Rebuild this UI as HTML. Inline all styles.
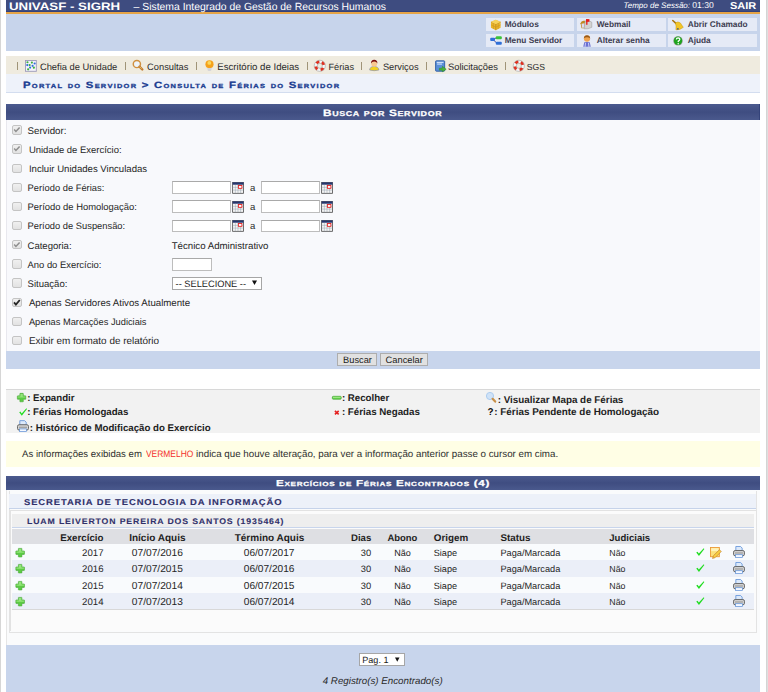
<!DOCTYPE html>
<html><head><meta charset="utf-8">
<style>
html,body{margin:0;padding:0;}
body{width:768px;height:692px;position:relative;overflow:hidden;background:#fff;font-family:"Liberation Sans",sans-serif;color:#333;text-rendering:geometricPrecision;}
.t{position:absolute;white-space:nowrap;line-height:12px;z-index:3;}
.box{position:absolute;}
svg{position:absolute;overflow:visible;z-index:3;}
.cb{position:absolute;z-index:2;width:7.6px;height:7.4px;border:1px solid #c4c4c4;border-radius:2px;background:linear-gradient(#f0f0f0,#e2e2e2);}
.inp{position:absolute;z-index:2;border:1px solid #bdbdbd;border-top-color:#a9a9a9;background:#fff;}
.sel{position:absolute;z-index:2;border:1px solid #a6a6a6;background:#fff;}
.btn{position:absolute;z-index:2;border:1px solid #adadad;background:#e1e1e1;}
</style></head><body>
<div class="box" style="left:0px;top:0px;width:1px;height:692px;background:#d6d6d6"></div>
<div class="box" style="left:766px;top:0px;width:2px;height:692px;background:linear-gradient(90deg,#cfcfcf,#e4e4e4)"></div>
<div class="box" style="left:6px;top:0px;width:754px;height:13px;background:#3e4c80"></div>
<div class="box" style="left:6px;top:14px;width:754px;height:36.5px;background:#c7d4eb"></div>
<div class="box" style="left:6px;top:11px;width:754px;height:1.3px;background:#34417a"></div>
<div class="box" style="left:6px;top:12.3px;width:754px;height:2.2px;background:#e5a446"></div>
<span class="t" style="left:8.60px;top:1px;font-size:10.8px;letter-spacing:0.0px;transform:scaleX(1.2302);transform-origin:0 0;font-weight:bold;color:#fff;">UNIVASF - SIGRH</span>
<span class="t" style="left:133.60px;top:2px;font-size:10.4px;color:#fff">– Sistema Integrado de Gestão de Recursos Humanos</span>
<span class="t" style="left:623.60px;top:0px;font-size:8.0px;font-style:italic;color:#fff">Tempo de Sessão:</span>
<span class="t" style="left:692.30px;top:-1px;font-size:8.6px;color:#fff">01:30</span>
<span class="t" style="left:729.50px;top:1px;font-size:10.0px;letter-spacing:0.0px;transform:scaleX(1.1001);transform-origin:0 0;font-weight:bold;color:#fff;">SAIR</span>
<div class="box" style="left:486px;top:17.5px;width:88px;height:13.3px;background:#e5eaf6"></div>
<div class="box" style="left:486px;top:33.7px;width:88px;height:13.1px;background:#e5eaf6"></div>
<div class="box" style="left:577px;top:17.5px;width:89px;height:13.3px;background:#e5eaf6"></div>
<div class="box" style="left:577px;top:33.7px;width:89px;height:13.1px;background:#e5eaf6"></div>
<div class="box" style="left:668px;top:17.5px;width:89px;height:13.3px;background:#e5eaf6"></div>
<div class="box" style="left:668px;top:33.7px;width:89px;height:13.1px;background:#e5eaf6"></div>
<span class="t" style="left:504.70px;top:18px;font-size:8.3px;font-weight:bold;color:#3c3c50">Módulos</span>
<span class="t" style="left:504.70px;top:34px;font-size:8.3px;font-weight:bold;color:#3c3c50">Menu Servidor</span>
<span class="t" style="left:596.70px;top:18px;font-size:8.3px;font-weight:bold;color:#3c3c50">Webmail</span>
<span class="t" style="left:596.70px;top:34px;font-size:8.3px;font-weight:bold;color:#3c3c50">Alterar senha</span>
<span class="t" style="left:687.70px;top:18px;font-size:8.3px;font-weight:bold;color:#3c3c50">Abrir Chamado</span>
<span class="t" style="left:687.70px;top:34px;font-size:8.3px;font-weight:bold;color:#3c3c50">Ajuda</span>
<svg style="left:489.7px;top:19px" width="11.6" height="11.8" viewBox="0 0 12 12"><path d="M1 3 L6 0.8 L11 3 L11 9 L6 11.5 L1 9Z" fill="#e9b62c"/><path d="M1 3 L6 5.2 L11 3 M6 5.2 V11.5" fill="none" stroke="#b9821a" stroke-width="0.7"/><path d="M1 6 L6 8.3 L11 6 M3.5 1.9 L3.5 10.2 M8.5 1.9 L8.5 10.2" fill="none" stroke="#c8901e" stroke-width="0.5"/><path d="M1 3 L6 0.8 L11 3 L6 5.2Z" fill="#f6d25a"/></svg>
<svg style="left:489.7px;top:36.4px" width="12" height="9" viewBox="0 0 12 9"><path d="M3 3.5 L7 1.5 M3 3.5 L7 7.3" stroke="#3a3a8a" stroke-width="0.9" fill="none"/><rect x="0.2" y="1.8" width="4.8" height="3.3" rx="1" fill="#2f6fd8"/><rect x="5.8" y="0.2" width="6" height="3" rx="1" fill="#3cc23a"/><rect x="5.8" y="5.8" width="6" height="3" rx="1" fill="#2f6fd8"/></svg>
<svg style="left:580px;top:19px" width="12.3" height="10.5" viewBox="0 0 12 10"><path d="M0.5 4 Q1 1.5 3.5 1.5 L5 1.5 L5 9 L1.5 9Z" fill="#c08a20"/><path d="M1.5 4.5 L4.5 4 L4.5 8.5 L2 8.5Z" fill="#dcdcf5"/><path d="M5 1.8 Q9.5 1 11.5 3 L11.5 8 Q8 10 4 9.5Z" fill="#d2d2d2" stroke="#9a9a9a" stroke-width="0.5"/><rect x="6" y="0" width="1.3" height="5.5" fill="#e51a1a"/><rect x="6" y="0" width="3.2" height="2.6" fill="#e51a1a"/></svg>
<svg style="left:583px;top:35px" width="8" height="11.8" viewBox="0 0 8 12"><circle cx="4" cy="3.6" r="3.2" fill="#f0a450"/><path d="M0.8 3.2 Q1 0.2 4 0.2 Q7 0.2 7.2 3.2 Q4 1.5 0.8 3.2Z" fill="#9a5a18"/><path d="M0.2 12 L1.2 7.5 Q4 6.6 6.8 7.5 L7.8 12Z" fill="#6a70d0"/><path d="M2.5 8 L2 12 M5.5 8 L6 12" stroke="#e8e8ff" stroke-width="0.8"/></svg>
<svg style="left:671.9px;top:19px" width="11.8" height="11.8" viewBox="0 0 12 12"><path d="M0.8 1.5 L4 4.5" stroke="#a8740e" stroke-width="1.6" stroke-linecap="round"/><path d="M3.5 4 Q6 2 8.5 4 L11.5 8.5 Q8 11.5 4 11 Q4.5 7 3.5 4Z" fill="#f2c628" stroke="#c8960e" stroke-width="0.5"/><circle cx="6" cy="10" r="0.9" fill="#4a5a7a"/></svg>
<svg style="left:673.3px;top:36.4px" width="10" height="9.8" viewBox="0 0 10 10"><circle cx="5" cy="5" r="4.8" fill="#9a9a9a"/><circle cx="5" cy="4.8" r="4.3" fill="#1fa51f"/><path d="M3.3 3.6 Q3.4 1.8 5.1 1.8 Q6.9 1.9 6.8 3.5 Q6.7 4.6 5.3 5.2 L5.2 6.3" fill="none" stroke="#fff" stroke-width="1.3"/><circle cx="5.2" cy="7.9" r="0.8" fill="#fff"/></svg>
<div class="box" style="left:6px;top:56px;width:754px;height:18px;background:#efebdf"></div>
<div class="box" style="left:17.4px;top:62.1px;width:1px;height:8px;background:#a09478;z-index:3"></div>
<div class="box" style="left:125.3px;top:62.1px;width:1px;height:8px;background:#a09478;z-index:3"></div>
<div class="box" style="left:195.6px;top:62.1px;width:1px;height:8px;background:#a09478;z-index:3"></div>
<div class="box" style="left:307.2px;top:62.1px;width:1px;height:8px;background:#a09478;z-index:3"></div>
<div class="box" style="left:361px;top:62.1px;width:1px;height:8px;background:#a09478;z-index:3"></div>
<div class="box" style="left:426.4px;top:62.1px;width:1px;height:8px;background:#a09478;z-index:3"></div>
<div class="box" style="left:505px;top:62.1px;width:1px;height:8px;background:#a09478;z-index:3"></div>
<span class="t" style="left:39.90px;top:61px;font-size:9.35px;color:#2a2a2a">Chefia de Unidade</span>
<span class="t" style="left:147.10px;top:61px;font-size:9.3px;color:#2a2a2a">Consultas</span>
<span class="t" style="left:217.30px;top:62px;font-size:9.65px;color:#2a2a2a">Escritório de Ideias</span>
<span class="t" style="left:328.50px;top:61px;font-size:9.2px;color:#2a2a2a">Férias</span>
<span class="t" style="left:382.90px;top:61px;font-size:9.3px;color:#2a2a2a">Serviços</span>
<span class="t" style="left:448.00px;top:61px;font-size:9.35px;color:#2a2a2a">Solicitações</span>
<span class="t" style="left:526.70px;top:61px;font-size:8.7px;color:#2a2a2a">SGS</span>
<svg style="left:25.25px;top:59.6px" width="11.8" height="11.8" viewBox="0 0 12 12"><rect x="0.5" y="0.5" width="11" height="11" fill="#f4f2fb" stroke="#9a98b8" stroke-width="0.9"/><g fill="#3cb23c"><circle cx="2.5" cy="2.3" r="1.1"/><circle cx="7" cy="2.6" r="1.1"/><circle cx="4.7" cy="5.2" r="1.1"/><circle cx="9" cy="7.8" r="1.1"/><circle cx="3.2" cy="9.5" r="1.1"/></g><g fill="#2f6fd8"><circle cx="9.8" cy="3.6" r="1.1"/><circle cx="2.3" cy="5.2" r="1.1"/><circle cx="7.7" cy="5.9" r="1.1"/><circle cx="5.2" cy="7.7" r="1.1"/></g></svg>
<svg style="left:132.3px;top:59.2px" width="11.7" height="12" viewBox="0 0 12 12"><circle cx="5" cy="5" r="3.7" fill="#eef4fa" stroke="#d09040" stroke-width="1.5"/><path d="M7.7 7.7 L10.6 10.6" stroke="#c07a30" stroke-width="2.4" stroke-linecap="round"/><path d="M8 8 L9.5 9.5" stroke="#f0d070" stroke-width="0.9" stroke-linecap="round"/></svg>
<svg style="left:204.8px;top:59.8px" width="9" height="11.6" viewBox="0 0 9 12"><circle cx="4.5" cy="4.4" r="4.2" fill="#f5a11a"/><circle cx="4.3" cy="3" r="2" fill="#fbd75a"/><path d="M2.2 8 Q4.5 9 6.8 8 L6.3 10.8 Q4.5 12 2.7 10.8Z" fill="#d4d4d8"/></svg>
<svg style="left:314.2px;top:59.8px" width="11.6" height="11.6" viewBox="0 0 12 12"><circle cx="6" cy="6" r="4.2" fill="none" stroke="#f4f6f8" stroke-width="3.2"/><circle cx="6" cy="6" r="4.2" fill="none" stroke="#e2301e" stroke-width="3.2" stroke-dasharray="3.3 3.3" transform="rotate(-60 6 6)"/><circle cx="6" cy="6" r="5.8" fill="none" stroke="#a0a0a0" stroke-width="0.6"/><circle cx="6" cy="6" r="2.6" fill="#efebdf" stroke="#9a9a9a" stroke-width="0.6"/></svg>
<svg style="left:369px;top:59.2px" width="10.5" height="12" viewBox="0 0 10.5 12"><path d="M0.6 11 Q0.8 7.6 5.2 7.4 Q9.6 7.6 9.9 11 Q5.2 12.4 0.6 11Z" fill="#f3d21e" stroke="#7a86b8" stroke-width="0.6"/><circle cx="5.2" cy="4.8" r="2.9" fill="#f8c890"/><path d="M2 4.5 Q2 0.8 5.2 0.8 Q8.4 0.8 8.4 4.5 Q7.5 2.6 5.2 2.6 Q2.9 2.6 2 4.5Z" fill="#7a0c0c"/></svg>
<svg style="left:434.5px;top:59.6px" width="11.6" height="12" viewBox="0 0 12 12"><rect x="0.6" y="0.6" width="9.4" height="10.8" rx="0.8" fill="#5a90d8" stroke="#2a58a0" stroke-width="0.9"/><rect x="1.8" y="1.7" width="7" height="1" fill="#e8f0ff"/><rect x="2.2" y="3.4" width="5" height="1.2" fill="#c8dcf8"/><path d="M4.5 8.3 H7.6 V6.3 L11.6 9.3 L7.6 12 V10.3 H4.5Z" fill="#4bb43a" stroke="#2a8a20" stroke-width="0.5"/></svg>
<svg style="left:512.6px;top:59.8px" width="11.6" height="11.6" viewBox="0 0 12 12"><circle cx="6" cy="6" r="4.2" fill="none" stroke="#f4f6f8" stroke-width="3.2"/><circle cx="6" cy="6" r="4.2" fill="none" stroke="#e2301e" stroke-width="3.2" stroke-dasharray="3.3 3.3" transform="rotate(-60 6 6)"/><circle cx="6" cy="6" r="5.8" fill="none" stroke="#a0a0a0" stroke-width="0.6"/><circle cx="6" cy="6" r="2.6" fill="#efebdf" stroke="#9a9a9a" stroke-width="0.6"/></svg>
<div class="box" style="left:6px;top:74px;width:754px;height:17.7px;background:#eef2fa"></div>
<div class="box" style="left:6px;top:91.7px;width:754px;height:1px;background:#d3ddef"></div>
<span class="t" style="left:23.30px;top:79px;font-size:9.1px;letter-spacing:1.0px;transform:scaleX(1.2478);transform-origin:0 0;font-weight:bold;color:#1b3d91;font-variant:small-caps;-webkit-text-stroke:0.3px #1b3d91;">Portal do Servidor &gt; Consulta de Férias do Servidor</span>
<div class="box" style="left:6px;top:104px;width:754px;height:16px;background:linear-gradient(#4b5a8e,#3f4d81 50%,#4a598d);border-right:1px solid #34437a;box-sizing:border-box"></div>
<span class="t" style="left:323.10px;top:107px;font-size:9.3px;letter-spacing:0.5px;transform:scaleX(1.2711);transform-origin:0 0;font-weight:bold;color:#fff;font-variant:small-caps;-webkit-text-stroke:0.25px #fff;">Busca por Servidor</span>
<div class="box" style="left:6px;top:120px;width:754px;height:230.5px;background:#f8f9fc"></div>
<div class="box" style="left:6px;top:120px;width:1px;height:230.5px;background:#e8e8ee"></div>
<span class="t" style="left:27.50px;top:126px;font-size:9.72px;color:#262626">Servidor:</span>
<div class="cb" style="left:12.2px;top:125.20px"><svg width="9.6" height="9.2" viewBox="0 0 9.6 9.2" style="left:-1px;top:-1px"><path d="M2.2 4.6 L3.9 6.4 L7.6 2.4" fill="none" stroke="#8e8e8e" stroke-width="1.5"/></svg></div>
<span class="t" style="left:28.90px;top:145px;font-size:9.48px;color:#262626">Unidade de Exercício:</span>
<div class="cb" style="left:12.2px;top:144.35px"><svg width="9.6" height="9.2" viewBox="0 0 9.6 9.2" style="left:-1px;top:-1px"><path d="M2.2 4.6 L3.9 6.4 L7.6 2.4" fill="none" stroke="#8e8e8e" stroke-width="1.5"/></svg></div>
<span class="t" style="left:28.90px;top:164px;font-size:9.61px;color:#262626">Incluir Unidades Vinculadas</span>
<div class="cb" style="left:12.2px;top:163.50px"></div>
<span class="t" style="left:27.50px;top:182px;font-size:9.34px;color:#262626">Período de Férias:</span>
<div class="cb" style="left:12.2px;top:182.65px"></div>
<span class="t" style="left:27.50px;top:201px;font-size:9.41px;color:#262626">Período de Homologação:</span>
<div class="cb" style="left:12.2px;top:201.80px"></div>
<span class="t" style="left:27.50px;top:220px;font-size:9.35px;color:#262626">Período de Suspensão:</span>
<div class="cb" style="left:12.2px;top:220.95px"></div>
<span class="t" style="left:27.50px;top:241px;font-size:9.56px;color:#262626">Categoria:</span>
<div class="cb" style="left:12.2px;top:240.10px"><svg width="9.6" height="9.2" viewBox="0 0 9.6 9.2" style="left:-1px;top:-1px"><path d="M2.2 4.6 L3.9 6.4 L7.6 2.4" fill="none" stroke="#8e8e8e" stroke-width="1.5"/></svg></div>
<span class="t" style="left:27.50px;top:259px;font-size:9.43px;color:#262626">Ano do Exercício:</span>
<div class="cb" style="left:12.2px;top:259.25px"></div>
<span class="t" style="left:27.50px;top:279px;font-size:9.59px;color:#262626">Situação:</span>
<div class="cb" style="left:12.2px;top:278.40px"></div>
<span class="t" style="left:28.90px;top:298px;font-size:9.68px;color:#262626">Apenas Servidores Ativos Atualmente</span>
<div class="cb" style="left:12.2px;top:297.55px"><svg width="9.6" height="9.2" viewBox="0 0 9.6 9.2" style="left:-1px;top:-1px"><path d="M2.0 4.4 L3.9 6.6 L7.8 2.0" fill="none" stroke="#262626" stroke-width="1.8"/></svg></div>
<span class="t" style="left:28.90px;top:316px;font-size:9.29px;color:#262626">Apenas Marcações Judiciais</span>
<div class="cb" style="left:12.2px;top:316.70px"></div>
<span class="t" style="left:28.90px;top:336px;font-size:9.93px;color:#262626">Exibir em formato de relatório</span>
<div class="cb" style="left:12.2px;top:335.85px"></div>
<div class="inp" style="left:171.7px;top:181.30px;width:57.3px;height:10.9px"></div>
<svg style="left:231.5px;top:182.0px" width="12.2" height="11.7" viewBox="0 0 12 12"><rect x="0.4" y="0.4" width="11.2" height="11.2" fill="#f4f4f4" stroke="#444" stroke-width="0.8"/><rect x="0.4" y="0.4" width="11.2" height="2.4" fill="#26366e"/><g stroke="#8a9aa8" stroke-width="0.45"><path d="M0.5 5.5 H11.5 M0.5 8.3 H11.5 M3.2 2.8 V11.5 M5.9 2.8 V11.5 M8.6 2.8 V11.5"/></g><rect x="6.3" y="3.6" width="3.6" height="2.9" fill="#fff" stroke="#e41e1e" stroke-width="0.9"/></svg>
<div class="inp" style="left:261.2px;top:181.30px;width:56.8px;height:10.9px"></div>
<svg style="left:320.5px;top:182.0px" width="12.2" height="11.7" viewBox="0 0 12 12"><rect x="0.4" y="0.4" width="11.2" height="11.2" fill="#f4f4f4" stroke="#444" stroke-width="0.8"/><rect x="0.4" y="0.4" width="11.2" height="2.4" fill="#26366e"/><g stroke="#8a9aa8" stroke-width="0.45"><path d="M0.5 5.5 H11.5 M0.5 8.3 H11.5 M3.2 2.8 V11.5 M5.9 2.8 V11.5 M8.6 2.8 V11.5"/></g><rect x="6.3" y="3.6" width="3.6" height="2.9" fill="#fff" stroke="#e41e1e" stroke-width="0.9"/></svg>
<span class="t" style="left:250.00px;top:183px;font-size:9.5px;color:#262626">a</span>
<div class="inp" style="left:171.7px;top:200.45px;width:57.3px;height:10.9px"></div>
<svg style="left:231.5px;top:201.15px" width="12.2" height="11.7" viewBox="0 0 12 12"><rect x="0.4" y="0.4" width="11.2" height="11.2" fill="#f4f4f4" stroke="#444" stroke-width="0.8"/><rect x="0.4" y="0.4" width="11.2" height="2.4" fill="#26366e"/><g stroke="#8a9aa8" stroke-width="0.45"><path d="M0.5 5.5 H11.5 M0.5 8.3 H11.5 M3.2 2.8 V11.5 M5.9 2.8 V11.5 M8.6 2.8 V11.5"/></g><rect x="6.3" y="3.6" width="3.6" height="2.9" fill="#fff" stroke="#e41e1e" stroke-width="0.9"/></svg>
<div class="inp" style="left:261.2px;top:200.45px;width:56.8px;height:10.9px"></div>
<svg style="left:320.5px;top:201.15px" width="12.2" height="11.7" viewBox="0 0 12 12"><rect x="0.4" y="0.4" width="11.2" height="11.2" fill="#f4f4f4" stroke="#444" stroke-width="0.8"/><rect x="0.4" y="0.4" width="11.2" height="2.4" fill="#26366e"/><g stroke="#8a9aa8" stroke-width="0.45"><path d="M0.5 5.5 H11.5 M0.5 8.3 H11.5 M3.2 2.8 V11.5 M5.9 2.8 V11.5 M8.6 2.8 V11.5"/></g><rect x="6.3" y="3.6" width="3.6" height="2.9" fill="#fff" stroke="#e41e1e" stroke-width="0.9"/></svg>
<span class="t" style="left:250.00px;top:202px;font-size:9.5px;color:#262626">a</span>
<div class="inp" style="left:171.7px;top:219.60px;width:57.3px;height:10.9px"></div>
<svg style="left:231.5px;top:220.3px" width="12.2" height="11.7" viewBox="0 0 12 12"><rect x="0.4" y="0.4" width="11.2" height="11.2" fill="#f4f4f4" stroke="#444" stroke-width="0.8"/><rect x="0.4" y="0.4" width="11.2" height="2.4" fill="#26366e"/><g stroke="#8a9aa8" stroke-width="0.45"><path d="M0.5 5.5 H11.5 M0.5 8.3 H11.5 M3.2 2.8 V11.5 M5.9 2.8 V11.5 M8.6 2.8 V11.5"/></g><rect x="6.3" y="3.6" width="3.6" height="2.9" fill="#fff" stroke="#e41e1e" stroke-width="0.9"/></svg>
<div class="inp" style="left:261.2px;top:219.60px;width:56.8px;height:10.9px"></div>
<svg style="left:320.5px;top:220.3px" width="12.2" height="11.7" viewBox="0 0 12 12"><rect x="0.4" y="0.4" width="11.2" height="11.2" fill="#f4f4f4" stroke="#444" stroke-width="0.8"/><rect x="0.4" y="0.4" width="11.2" height="2.4" fill="#26366e"/><g stroke="#8a9aa8" stroke-width="0.45"><path d="M0.5 5.5 H11.5 M0.5 8.3 H11.5 M3.2 2.8 V11.5 M5.9 2.8 V11.5 M8.6 2.8 V11.5"/></g><rect x="6.3" y="3.6" width="3.6" height="2.9" fill="#fff" stroke="#e41e1e" stroke-width="0.9"/></svg>
<span class="t" style="left:250.00px;top:221px;font-size:9.5px;color:#262626">a</span>
<span class="t" style="left:171.70px;top:241px;font-size:9.69px;color:#262626">Técnico Administrativo</span>
<div class="inp" style="left:171.7px;top:258.1px;width:38.6px;height:10.5px"></div>
<div class="sel" style="left:171.7px;top:276.9px;width:88.2px;height:11.1px"></div>
<span class="t" style="left:175.60px;top:278px;font-size:9.25px;color:#1a1a1a">-- SELECIONE --</span>
<svg style="left:252px;top:280.3px" width="5" height="5.2" viewBox="0 0 5 5"><path d="M0 0.3 H5 L2.5 5Z" fill="#111"/></svg>
<div class="box" style="left:6px;top:350.5px;width:754px;height:18px;background:#c8d5ec"></div>
<div class="btn" style="left:337.2px;top:353.1px;width:37.5px;height:10.5px"></div>
<div class="btn" style="left:380.2px;top:353.1px;width:46.1px;height:10.5px"></div>
<span class="t" style="left:343.10px;top:354px;font-size:9.25px;color:#1a1a1a">Buscar</span>
<span class="t" style="left:385.60px;top:354px;font-size:9.3px;color:#1a1a1a">Cancelar</span>
<div class="box" style="left:6px;top:389px;width:754px;height:43.6px;background:#f2f2f2;border-top:1px solid #d8d8d8;box-sizing:border-box"></div>
<svg style="left:16.9px;top:392.9px" width="9.2" height="9.2" viewBox="0 0 10 10"><path d="M3.4 0.4 H6.6 Q6.9 0.4 6.9 0.8 V3.1 H9.2 Q9.6 3.1 9.6 3.5 V6.5 Q9.6 6.9 9.2 6.9 H6.9 V9.2 Q6.9 9.6 6.5 9.6 H3.5 Q3.1 9.6 3.1 9.2 V6.9 H0.8 Q0.4 6.9 0.4 6.5 V3.5 Q0.4 3.1 0.8 3.1 H3.1 V0.8 Q3.1 0.4 3.4 0.4Z" fill="#5ccc44" stroke="#3fa02e" stroke-width="0.55"/><path d="M3.7 1 H6.3 V3.7 H9 V5 H1 V3.7 H3.7Z" fill="#9ee884" opacity="0.85"/></svg>
<span class="t" style="left:27.20px;top:393px;font-size:9.7px;font-weight:bold;color:#1e1e1e">: Expandir</span>
<svg style="left:18.5px;top:407.8px" width="8" height="8" viewBox="0 0 8 8"><path d="M0.2 4.3 L1.4 3.6 L2.7 5.4 L7.4 0.2 L8 0.9 L2.8 7.8Z" fill="#22dd22"/></svg>
<span class="t" style="left:27.20px;top:407px;font-size:9.7px;font-weight:bold;color:#1e1e1e">: Férias Homologadas</span>
<svg style="left:16.9px;top:420.0px" width="12" height="12.3" viewBox="0 0 12 12"><path d="M2.8 0.5 H7.6 L9.2 2.1 V5.2 H2.8Z" fill="#dce9fa" stroke="#5a8ed6" stroke-width="0.8"/><rect x="0.5" y="4.6" width="11" height="5.3" rx="1.6" fill="#d4d4d4" stroke="#5a5a5a" stroke-width="0.9"/><rect x="2" y="6.6" width="8" height="0.9" fill="#8a8a8a"/><rect x="2.6" y="8.8" width="6.8" height="2.7" fill="#f4f8ff" stroke="#5a8ed6" stroke-width="0.7"/></svg>
<span class="t" style="left:29.80px;top:423px;font-size:9.7px;font-weight:bold;color:#1e1e1e">: Histórico de Modificação do Exercício</span>
<svg style="left:331.7px;top:395.9px" width="9.6" height="3.8" viewBox="0 0 10 4"><rect x="0.3" y="0.3" width="9.4" height="3.2" rx="1" fill="#62d24a" stroke="#3a9a2a" stroke-width="0.6"/><rect x="1" y="0.9" width="8" height="0.9" fill="#b0f098"/></svg>
<span class="t" style="left:341.90px;top:393px;font-size:9.7px;font-weight:bold;color:#1e1e1e">: Recolher</span>
<svg style="left:334px;top:410.2px" width="5.6" height="5.3" viewBox="0 0 5.5 5.2"><path d="M0.9 0.9 L4.6 4.3 M4.6 0.9 L0.9 4.3" stroke="#e52222" stroke-width="1.6"/></svg>
<span class="t" style="left:341.90px;top:407px;font-size:9.75px;font-weight:bold;color:#1e1e1e">: Férias Negadas</span>
<svg style="left:485.8px;top:392.3px" width="10" height="10.4" viewBox="0 0 10 10.4"><circle cx="4" cy="4" r="3.6" fill="#cfe2f7" stroke="#a6c8ee" stroke-width="0.9"/><path d="M6.6 6.8 L9.2 9.6" stroke="#c89048" stroke-width="2.2" stroke-linecap="round"/></svg>
<span class="t" style="left:497.70px;top:395px;font-size:9.85px;font-weight:bold;color:#1e1e1e">: Visualizar Mapa de Férias</span>
<span class="t" style="left:487.60px;top:407px;font-size:9.9px;font-weight:bold;color:#111">?</span>
<span class="t" style="left:494.30px;top:407px;font-size:9.9px;font-weight:bold;color:#1e1e1e">: Férias Pendente de Homologação</span>
<div class="box" style="left:6px;top:441.2px;width:754px;height:25.5px;background:#fffee5"></div>
<span class="t" style="left:22.10px;top:449px;font-size:9.59px;color:#2e2e2e">As informações exibidas em</span>
<span class="t" style="left:145.90px;top:448px;font-size:9.3px;letter-spacing:0.0px;transform:scaleX(0.9063);transform-origin:0 0;color:#f3302c;">VERMELHO</span>
<span class="t" style="left:196.10px;top:449px;font-size:9.78px;color:#2e2e2e">indica que houve alteração, para ver a informação anterior passe o cursor em cima.</span>
<div class="box" style="left:6px;top:475.5px;width:754px;height:14.2px;background:linear-gradient(#4b5a8e,#3f4d81 50%,#4a598d)"></div>
<span class="t" style="left:275.70px;top:477px;font-size:8.6px;letter-spacing:0.5px;transform:scaleX(1.3591);transform-origin:0 0;font-weight:bold;color:#fff;font-variant:small-caps;-webkit-text-stroke:0.25px #fff;">Exercícios de Férias Encontrados (4)</span>
<div class="box" style="left:6px;top:489.7px;width:754px;height:155.5px;background:#fafbfc"></div>
<div class="box" style="left:6px;top:489.7px;width:1px;height:155.5px;background:#e6e6e6"></div>
<div class="box" style="left:8.5px;top:491px;width:748px;height:141.6px;border:1px solid #e3e3e3;border-top:none;box-sizing:border-box"></div>
<div class="box" style="left:9.3px;top:493.8px;width:747px;height:14.4px;background:#edf1f9;border-bottom:1.2px solid #c6d3ea"></div>
<span class="t" style="left:24.30px;top:496px;font-size:8.5px;letter-spacing:0.8px;transform:scaleX(1.1103);transform-origin:0 0;font-weight:bold;color:#30306a;-webkit-text-stroke:0.1px #30306a;">SECRETARIA DE TECNOLOGIA DA INFORMAÇÃO</span>
<div class="box" style="left:10.2px;top:510.4px;width:745.5px;height:121px;border:1px solid #e2e2e2;border-bottom:none;border-right:none;box-sizing:border-box;background:#fbfbfb"></div>
<div class="box" style="left:12.2px;top:513.8px;width:742px;height:13px;background:#eeeeee"></div>
<div class="box" style="left:12.2px;top:526.8px;width:742px;height:1.3px;background:#c8d5ec"></div>
<span class="t" style="left:27.40px;top:516px;font-size:8.1px;letter-spacing:0.8px;transform:scaleX(1.0771);transform-origin:0 0;font-weight:bold;color:#30306a;-webkit-text-stroke:0.1px #30306a;">LUAM LEIVERTON PEREIRA DOS SANTOS (1935464)</span>
<div class="box" style="left:12.2px;top:528.8px;width:742px;height:15px;background:#dedfe3"></div>
<div class="box" style="left:12.2px;top:543.8px;width:742px;height:16.5px;background:#f9fbfd"></div>
<div class="box" style="left:12.2px;top:560.3px;width:742px;height:16.4px;background:#ebeff8"></div>
<div class="box" style="left:12.2px;top:576.7px;width:742px;height:16.3px;background:#f9fbfd"></div>
<div class="box" style="left:12.2px;top:593px;width:742px;height:16.3px;background:#ebeff8"></div>
<div class="box" style="left:12.2px;top:609.3px;width:742px;height:0.9px;background:#d8d8d8"></div>
<span class="t" style="right:664.50px;top:533px;font-size:9.74px;font-weight:bold;color:#1e1e1e">Exercício</span>
<span class="t" style="left:57.35px;width:200px;text-align:center;top:533px;font-size:10.0px;font-weight:bold;color:#1e1e1e">Início Aquis</span>
<span class="t" style="left:169.50px;width:200px;text-align:center;top:533px;font-size:10.0px;font-weight:bold;color:#1e1e1e">Término Aquis</span>
<span class="t" style="right:396.75px;top:533px;font-size:9.6px;font-weight:bold;color:#1e1e1e">Dias</span>
<span class="t" style="left:302.35px;width:200px;text-align:center;top:533px;font-size:9.45px;font-weight:bold;color:#1e1e1e">Abono</span>
<span class="t" style="left:433.75px;top:533px;font-size:9.83px;font-weight:bold;color:#1e1e1e">Origem</span>
<span class="t" style="left:500.40px;top:533px;font-size:9.82px;font-weight:bold;color:#1e1e1e">Status</span>
<span class="t" style="left:609.30px;top:533px;font-size:9.56px;font-weight:bold;color:#1e1e1e">Judiciais</span>
<svg style="left:14.9px;top:547.9px" width="10.3" height="9.4" viewBox="0 0 10 10"><path d="M3.4 0.4 H6.6 Q6.9 0.4 6.9 0.8 V3.1 H9.2 Q9.6 3.1 9.6 3.5 V6.5 Q9.6 6.9 9.2 6.9 H6.9 V9.2 Q6.9 9.6 6.5 9.6 H3.5 Q3.1 9.6 3.1 9.2 V6.9 H0.8 Q0.4 6.9 0.4 6.5 V3.5 Q0.4 3.1 0.8 3.1 H3.1 V0.8 Q3.1 0.4 3.4 0.4Z" fill="#5ccc44" stroke="#3fa02e" stroke-width="0.55"/><path d="M3.7 1 H6.3 V3.7 H9 V5 H1 V3.7 H3.7Z" fill="#9ee884" opacity="0.85"/></svg>
<span class="t" style="right:664.50px;top:548px;font-size:9.62px;color:#262626">2017</span>
<span class="t" style="left:57.35px;width:200px;text-align:center;top:548px;font-size:10.2px;color:#262626">07/07/2016</span>
<span class="t" style="left:169.10px;width:200px;text-align:center;top:548px;font-size:10.15px;color:#262626">06/07/2017</span>
<span class="t" style="right:396.75px;top:547px;font-size:9.35px;color:#262626">30</span>
<span class="t" style="left:302.50px;width:200px;text-align:center;top:547px;font-size:9.05px;color:#262626">Não</span>
<span class="t" style="left:433.75px;top:547px;font-size:9.15px;color:#262626">Siape</span>
<span class="t" style="left:500.40px;top:547px;font-size:9.21px;color:#262626">Paga/Marcada</span>
<span class="t" style="left:609.30px;top:547px;font-size:8.8px;color:#262626">Não</span>
<svg style="left:695.8px;top:548.0px" width="8.4" height="8.3" viewBox="0 0 8 8"><path d="M0.2 4.3 L1.4 3.6 L2.7 5.4 L7.4 0.2 L8 0.9 L2.8 7.8Z" fill="#22dd22"/></svg>
<svg style="left:732.5px;top:546.0px" width="12" height="11.9" viewBox="0 0 12 12"><path d="M2.8 0.5 H7.6 L9.2 2.1 V5.2 H2.8Z" fill="#dce9fa" stroke="#5a8ed6" stroke-width="0.8"/><rect x="0.5" y="4.6" width="11" height="5.3" rx="1.6" fill="#d4d4d4" stroke="#5a5a5a" stroke-width="0.9"/><rect x="2" y="6.6" width="8" height="0.9" fill="#8a8a8a"/><rect x="2.6" y="8.8" width="6.8" height="2.7" fill="#f4f8ff" stroke="#5a8ed6" stroke-width="0.7"/></svg>
<svg style="left:709.6px;top:547.0px" width="11.8" height="11.8" viewBox="0 0 12 12"><rect x="0.5" y="0.5" width="9" height="9.4" fill="#fbe07a" stroke="#eb9a36" stroke-width="0.9"/><rect x="1.2" y="1.2" width="7.6" height="3" fill="#fff2b8"/><path d="M2.6 11.6 L3.4 9 L9.6 2.8 L11.4 4.6 L5.2 10.8Z" fill="#f8d040" stroke="#c07a2a" stroke-width="0.7"/></svg>
<svg style="left:14.9px;top:564.2px" width="10.3" height="9.4" viewBox="0 0 10 10"><path d="M3.4 0.4 H6.6 Q6.9 0.4 6.9 0.8 V3.1 H9.2 Q9.6 3.1 9.6 3.5 V6.5 Q9.6 6.9 9.2 6.9 H6.9 V9.2 Q6.9 9.6 6.5 9.6 H3.5 Q3.1 9.6 3.1 9.2 V6.9 H0.8 Q0.4 6.9 0.4 6.5 V3.5 Q0.4 3.1 0.8 3.1 H3.1 V0.8 Q3.1 0.4 3.4 0.4Z" fill="#5ccc44" stroke="#3fa02e" stroke-width="0.55"/><path d="M3.7 1 H6.3 V3.7 H9 V5 H1 V3.7 H3.7Z" fill="#9ee884" opacity="0.85"/></svg>
<span class="t" style="right:664.50px;top:564px;font-size:9.62px;color:#262626">2016</span>
<span class="t" style="left:57.35px;width:200px;text-align:center;top:564px;font-size:10.2px;color:#262626">07/07/2015</span>
<span class="t" style="left:169.10px;width:200px;text-align:center;top:564px;font-size:10.15px;color:#262626">06/07/2016</span>
<span class="t" style="right:396.75px;top:563px;font-size:9.35px;color:#262626">30</span>
<span class="t" style="left:302.50px;width:200px;text-align:center;top:563px;font-size:9.05px;color:#262626">Não</span>
<span class="t" style="left:433.75px;top:563px;font-size:9.15px;color:#262626">Siape</span>
<span class="t" style="left:500.40px;top:563px;font-size:9.21px;color:#262626">Paga/Marcada</span>
<span class="t" style="left:609.30px;top:563px;font-size:8.8px;color:#262626">Não</span>
<svg style="left:695.8px;top:564.3px" width="8.4" height="8.3" viewBox="0 0 8 8"><path d="M0.2 4.3 L1.4 3.6 L2.7 5.4 L7.4 0.2 L8 0.9 L2.8 7.8Z" fill="#22dd22"/></svg>
<svg style="left:732.5px;top:562.3px" width="12" height="11.9" viewBox="0 0 12 12"><path d="M2.8 0.5 H7.6 L9.2 2.1 V5.2 H2.8Z" fill="#dce9fa" stroke="#5a8ed6" stroke-width="0.8"/><rect x="0.5" y="4.6" width="11" height="5.3" rx="1.6" fill="#d4d4d4" stroke="#5a5a5a" stroke-width="0.9"/><rect x="2" y="6.6" width="8" height="0.9" fill="#8a8a8a"/><rect x="2.6" y="8.8" width="6.8" height="2.7" fill="#f4f8ff" stroke="#5a8ed6" stroke-width="0.7"/></svg>
<svg style="left:14.9px;top:580.5px" width="10.3" height="9.4" viewBox="0 0 10 10"><path d="M3.4 0.4 H6.6 Q6.9 0.4 6.9 0.8 V3.1 H9.2 Q9.6 3.1 9.6 3.5 V6.5 Q9.6 6.9 9.2 6.9 H6.9 V9.2 Q6.9 9.6 6.5 9.6 H3.5 Q3.1 9.6 3.1 9.2 V6.9 H0.8 Q0.4 6.9 0.4 6.5 V3.5 Q0.4 3.1 0.8 3.1 H3.1 V0.8 Q3.1 0.4 3.4 0.4Z" fill="#5ccc44" stroke="#3fa02e" stroke-width="0.55"/><path d="M3.7 1 H6.3 V3.7 H9 V5 H1 V3.7 H3.7Z" fill="#9ee884" opacity="0.85"/></svg>
<span class="t" style="right:664.50px;top:581px;font-size:9.62px;color:#262626">2015</span>
<span class="t" style="left:57.35px;width:200px;text-align:center;top:581px;font-size:10.2px;color:#262626">07/07/2014</span>
<span class="t" style="left:169.10px;width:200px;text-align:center;top:581px;font-size:10.15px;color:#262626">06/07/2015</span>
<span class="t" style="right:396.75px;top:580px;font-size:9.35px;color:#262626">30</span>
<span class="t" style="left:302.50px;width:200px;text-align:center;top:580px;font-size:9.05px;color:#262626">Não</span>
<span class="t" style="left:433.75px;top:580px;font-size:9.15px;color:#262626">Siape</span>
<span class="t" style="left:500.40px;top:580px;font-size:9.21px;color:#262626">Paga/Marcada</span>
<span class="t" style="left:609.30px;top:580px;font-size:8.8px;color:#262626">Não</span>
<svg style="left:695.8px;top:580.6px" width="8.4" height="8.3" viewBox="0 0 8 8"><path d="M0.2 4.3 L1.4 3.6 L2.7 5.4 L7.4 0.2 L8 0.9 L2.8 7.8Z" fill="#22dd22"/></svg>
<svg style="left:732.5px;top:578.6px" width="12" height="11.9" viewBox="0 0 12 12"><path d="M2.8 0.5 H7.6 L9.2 2.1 V5.2 H2.8Z" fill="#dce9fa" stroke="#5a8ed6" stroke-width="0.8"/><rect x="0.5" y="4.6" width="11" height="5.3" rx="1.6" fill="#d4d4d4" stroke="#5a5a5a" stroke-width="0.9"/><rect x="2" y="6.6" width="8" height="0.9" fill="#8a8a8a"/><rect x="2.6" y="8.8" width="6.8" height="2.7" fill="#f4f8ff" stroke="#5a8ed6" stroke-width="0.7"/></svg>
<svg style="left:14.9px;top:596.8px" width="10.3" height="9.4" viewBox="0 0 10 10"><path d="M3.4 0.4 H6.6 Q6.9 0.4 6.9 0.8 V3.1 H9.2 Q9.6 3.1 9.6 3.5 V6.5 Q9.6 6.9 9.2 6.9 H6.9 V9.2 Q6.9 9.6 6.5 9.6 H3.5 Q3.1 9.6 3.1 9.2 V6.9 H0.8 Q0.4 6.9 0.4 6.5 V3.5 Q0.4 3.1 0.8 3.1 H3.1 V0.8 Q3.1 0.4 3.4 0.4Z" fill="#5ccc44" stroke="#3fa02e" stroke-width="0.55"/><path d="M3.7 1 H6.3 V3.7 H9 V5 H1 V3.7 H3.7Z" fill="#9ee884" opacity="0.85"/></svg>
<span class="t" style="right:664.50px;top:597px;font-size:9.62px;color:#262626">2014</span>
<span class="t" style="left:57.35px;width:200px;text-align:center;top:597px;font-size:10.2px;color:#262626">07/07/2013</span>
<span class="t" style="left:169.10px;width:200px;text-align:center;top:597px;font-size:10.15px;color:#262626">06/07/2014</span>
<span class="t" style="right:396.75px;top:596px;font-size:9.35px;color:#262626">30</span>
<span class="t" style="left:302.50px;width:200px;text-align:center;top:596px;font-size:9.05px;color:#262626">Não</span>
<span class="t" style="left:433.75px;top:596px;font-size:9.15px;color:#262626">Siape</span>
<span class="t" style="left:500.40px;top:596px;font-size:9.21px;color:#262626">Paga/Marcada</span>
<span class="t" style="left:609.30px;top:596px;font-size:8.8px;color:#262626">Não</span>
<svg style="left:695.8px;top:596.9px" width="8.4" height="8.3" viewBox="0 0 8 8"><path d="M0.2 4.3 L1.4 3.6 L2.7 5.4 L7.4 0.2 L8 0.9 L2.8 7.8Z" fill="#22dd22"/></svg>
<svg style="left:732.5px;top:594.9px" width="12" height="11.9" viewBox="0 0 12 12"><path d="M2.8 0.5 H7.6 L9.2 2.1 V5.2 H2.8Z" fill="#dce9fa" stroke="#5a8ed6" stroke-width="0.8"/><rect x="0.5" y="4.6" width="11" height="5.3" rx="1.6" fill="#d4d4d4" stroke="#5a5a5a" stroke-width="0.9"/><rect x="2" y="6.6" width="8" height="0.9" fill="#8a8a8a"/><rect x="2.6" y="8.8" width="6.8" height="2.7" fill="#f4f8ff" stroke="#5a8ed6" stroke-width="0.7"/></svg>
<div class="box" style="left:6px;top:645.2px;width:754px;height:46.8px;background:#c8d5ec"></div>
<div class="sel" style="left:358.8px;top:653.3px;width:43.9px;height:10.3px"></div>
<span class="t" style="left:362.30px;top:654px;font-size:9.06px;color:#1a1a1a">Pag. 1</span>
<svg style="left:395px;top:656.5px" width="4.5" height="5" viewBox="0 0 5 5"><path d="M0 0.3 H5 L2.5 5Z" fill="#111"/></svg>
<span class="t" style="left:322.70px;top:676px;font-size:9.77px;font-style:italic;color:#2a2a2a">4 Registro(s) Encontrado(s)</span>
</body></html>
